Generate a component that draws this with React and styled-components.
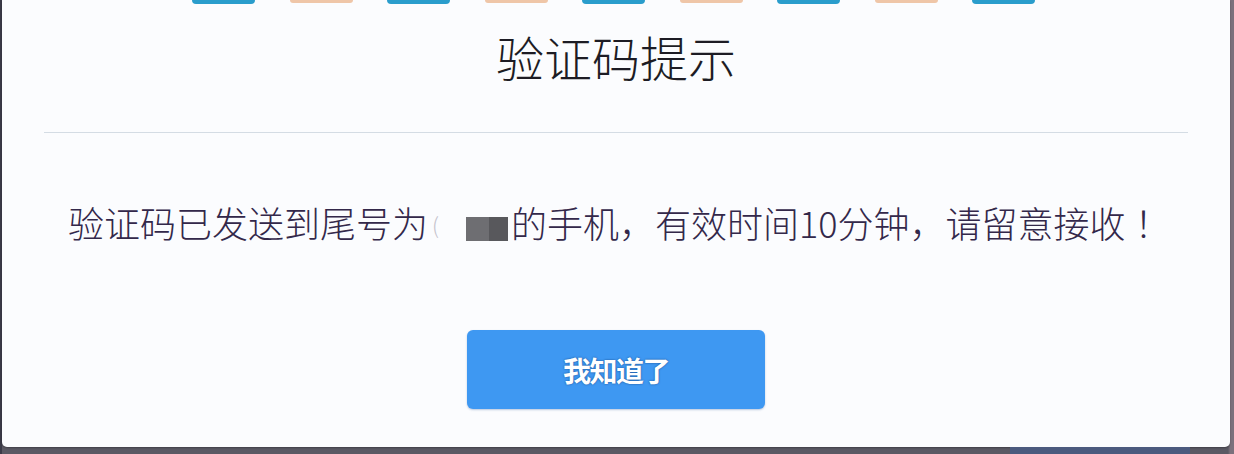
import styled, { createGlobalStyle } from "styled-components";

const GlobalStyle = createGlobalStyle`
    html, body {
        margin: 0;
        padding: 0;
        background: #5b5964;
    }
    body {
        font-family: "Noto Sans CJK SC", "Noto Sans", sans-serif;
    }
`;

const franjas = ["azul", "melon", "azul", "melon", "azul", "melon", "azul", "melon", "azul"];

export default function App() {
    return (
        <>
            <GlobalStyle />
            <Fondo>
                <Ventana>
                    <Franjas>
                        {franjas.map((tipo, i) => (
                            <Franja key={i} $tipo={tipo} />
                        ))}
                    </Franjas>
                    <Titulo>验证码提示</Titulo>
                    <Divisoria />
                    <Mensaje>
                        验证码已发送到尾号为<Parentesis>(</Parentesis>
                        <Tapado />
                        的手机，有效时间10分钟，请留意接收<Signo>！</Signo>
                    </Mensaje>
                    <Boton>我知道了</Boton>
                </Ventana>
                <Pie>
                    <PieMancha $ancho="180px" $color="#4b5a7e" />
                </Pie>
            </Fondo>
        </>
    );
}

const Fondo = styled.div`
    width: 1234px;
    height: 454px;
    box-sizing: border-box;
    padding: 0 4px 0 2px;
    background: linear-gradient(90deg, #3b3a48 0, #3b3a48 2px, #5b5964 2px, #5b5964 1228px, #7b717c 1230px);
    display: flex;
    flex-direction: column;
    overflow: hidden;
`;

const Ventana = styled.div`
    height: 447px;
    background: #fbfcfe;
    border-radius: 0 0 5px 5px;
    display: flex;
    flex-direction: column;
    box-shadow: 0 1px 2px rgba(0, 0, 0, 0.3);
`;

const Franjas = styled.div`
    display: flex;
    gap: 34.5px;
    padding-left: 190px;
    height: 4px;
`;

const Franja = styled.div`
    width: 63px;
    height: ${(p) => (p.$tipo === "azul" ? "4px" : "3px")};
    background: ${(p) => (p.$tipo === "azul" ? "#2a9dcc" : "#efc6a8")};
    border-radius: 0 0 4px 4px;
`;

const Titulo = styled.h1`
    margin: 28px 0 0;
    font-size: 48px;
    line-height: 48px;
    font-weight: 300;
    color: #1d1c24;
    text-align: center;
`;

const Divisoria = styled.div`
    margin: 52px 42px 0;
    height: 1px;
    background: #d4dce4;
`;

const Mensaje = styled.p`
    margin: 71px 0 0;
    padding-left: 66px;
    font-size: 36px;
    line-height: 36px;
    font-weight: 300;
    color: #33284a;
    white-space: nowrap;
`;

const Signo = styled.span`
    font-family: "Noto Sans CJK TC", "Noto Sans CJK SC", sans-serif;
`;

const Parentesis = styled.span`
    display: inline-block;
    width: 34px;
    padding-left: 4px;
    color: #c4c2cc;
    font-size: 22px;
    vertical-align: 4px;
`;

const Tapado = styled.span`
    display: inline-block;
    width: 42px;
    height: 24px;
    margin-right: 3px;
    vertical-align: -3px;
    background: linear-gradient(90deg, #6e6e72 0, #6e6e72 55%, #58585c 55%, #58585c 100%);
`;

const Boton = styled.button`
    align-self: center;
    margin-top: 88px;
    width: 298px;
    height: 79px;
    border: none;
    border-radius: 6px;
    background: #3e98f2;
    color: #fff;
    font-family: "Noto Sans CJK SC", "Noto Sans", sans-serif;
    font-size: 28px;
    font-weight: 700;
    letter-spacing: -1.5px;
    text-shadow: 0 0 2px rgba(10, 50, 110, 0.8);
    box-shadow: 0 1px 2px rgba(30, 80, 150, 0.3);
    cursor: pointer;
`;

const Pie = styled.div`
    flex: 1;
    display: flex;
    justify-content: flex-end;
    padding-right: 40px;
`;

const PieMancha = styled.div`
    width: ${(p) => p.$ancho};
    background: ${(p) => p.$color};
`;
